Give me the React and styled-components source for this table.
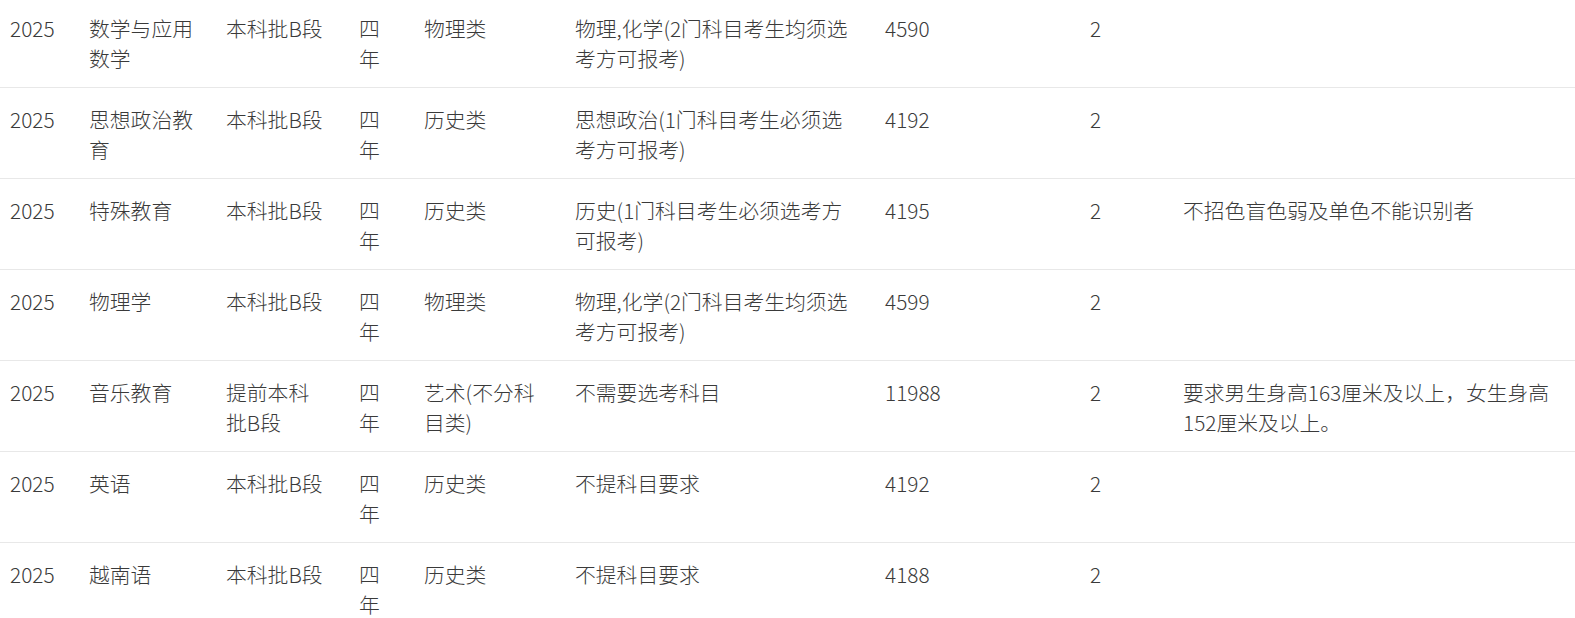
import React from 'react'
import styled, { createGlobalStyle } from 'styled-components'

const GlobalStyle = createGlobalStyle`
  html, body {
    margin: 0;
    padding: 0;
    background: #ffffff;
  }
  body {
    font-family: "Noto Sans CJK SC", "Noto Sans", sans-serif;
    color: #3a3a3a;
    overflow: hidden;
  }
`

const rows = [
  ['2025', '数学与应用数学', '本科批B段', '四年', '物理类', '物理,化学(2门科目考生均须选考方可报考)', '4590', '2', ''],
  ['2025', '思想政治教育', '本科批B段', '四年', '历史类', '思想政治(1门科目考生必须选考方可报考)', '4192', '2', ''],
  ['2025', '特殊教育', '本科批B段', '四年', '历史类', '历史(1门科目考生必须选考方可报考)', '4195', '2', '不招色盲色弱及单色不能识别者'],
  ['2025', '物理学', '本科批B段', '四年', '物理类', '物理,化学(2门科目考生均须选考方可报考)', '4599', '2', ''],
  ['2025', '音乐教育', '提前本科批B段', '四年', '艺术(不分科目类)', '不需要选考科目', '11988', '2', '要求男生身高163厘米及以上，女生身高152厘米及以上。'],
  ['2025', '英语', '本科批B段', '四年', '历史类', '不提科目要求', '4192', '2', ''],
  ['2025', '越南语', '本科批B段', '四年', '历史类', '不提科目要求', '4188', '2', ''],
]

// column width, content width
const cols = [
  [79, 62],
  [137, 116],
  [133, 98],
  [65, 24],
  [151, 116],
  [310, 280],
  [205, 180],
  [93, 70],
  [402, 376],
]

const App = () => {
  return (
    <>
      <GlobalStyle />
      <Table>
        {rows.map((row, i) => (
          <Row key={i}>
            {row.map((cell, j) => (
              <Cell key={j} $w={cols[j][0]}>
                <Text $w={cols[j][1]}>{cell}</Text>
              </Cell>
            ))}
          </Row>
        ))}
      </Table>
    </>
  )
}

export default App

const Table = styled.div`
  width: 1575px;
  margin-top: -3px;
`

const Row = styled.div`
  display: flex;
  align-items: flex-start;
  height: 91px;
  box-sizing: border-box;
  border-bottom: 1px solid #e8e8e8;
  padding-top: 15.5px;
  overflow: hidden;
`

const Cell = styled.div`
  flex: 0 0 ${p => p.$w}px;
  padding-left: 10px;
  box-sizing: border-box;
`

const Text = styled.div`
  width: ${p => p.$w}px;
  font-size: 20.8px;
  font-weight: 300;
  line-height: 30px;
  word-break: break-all;
`
